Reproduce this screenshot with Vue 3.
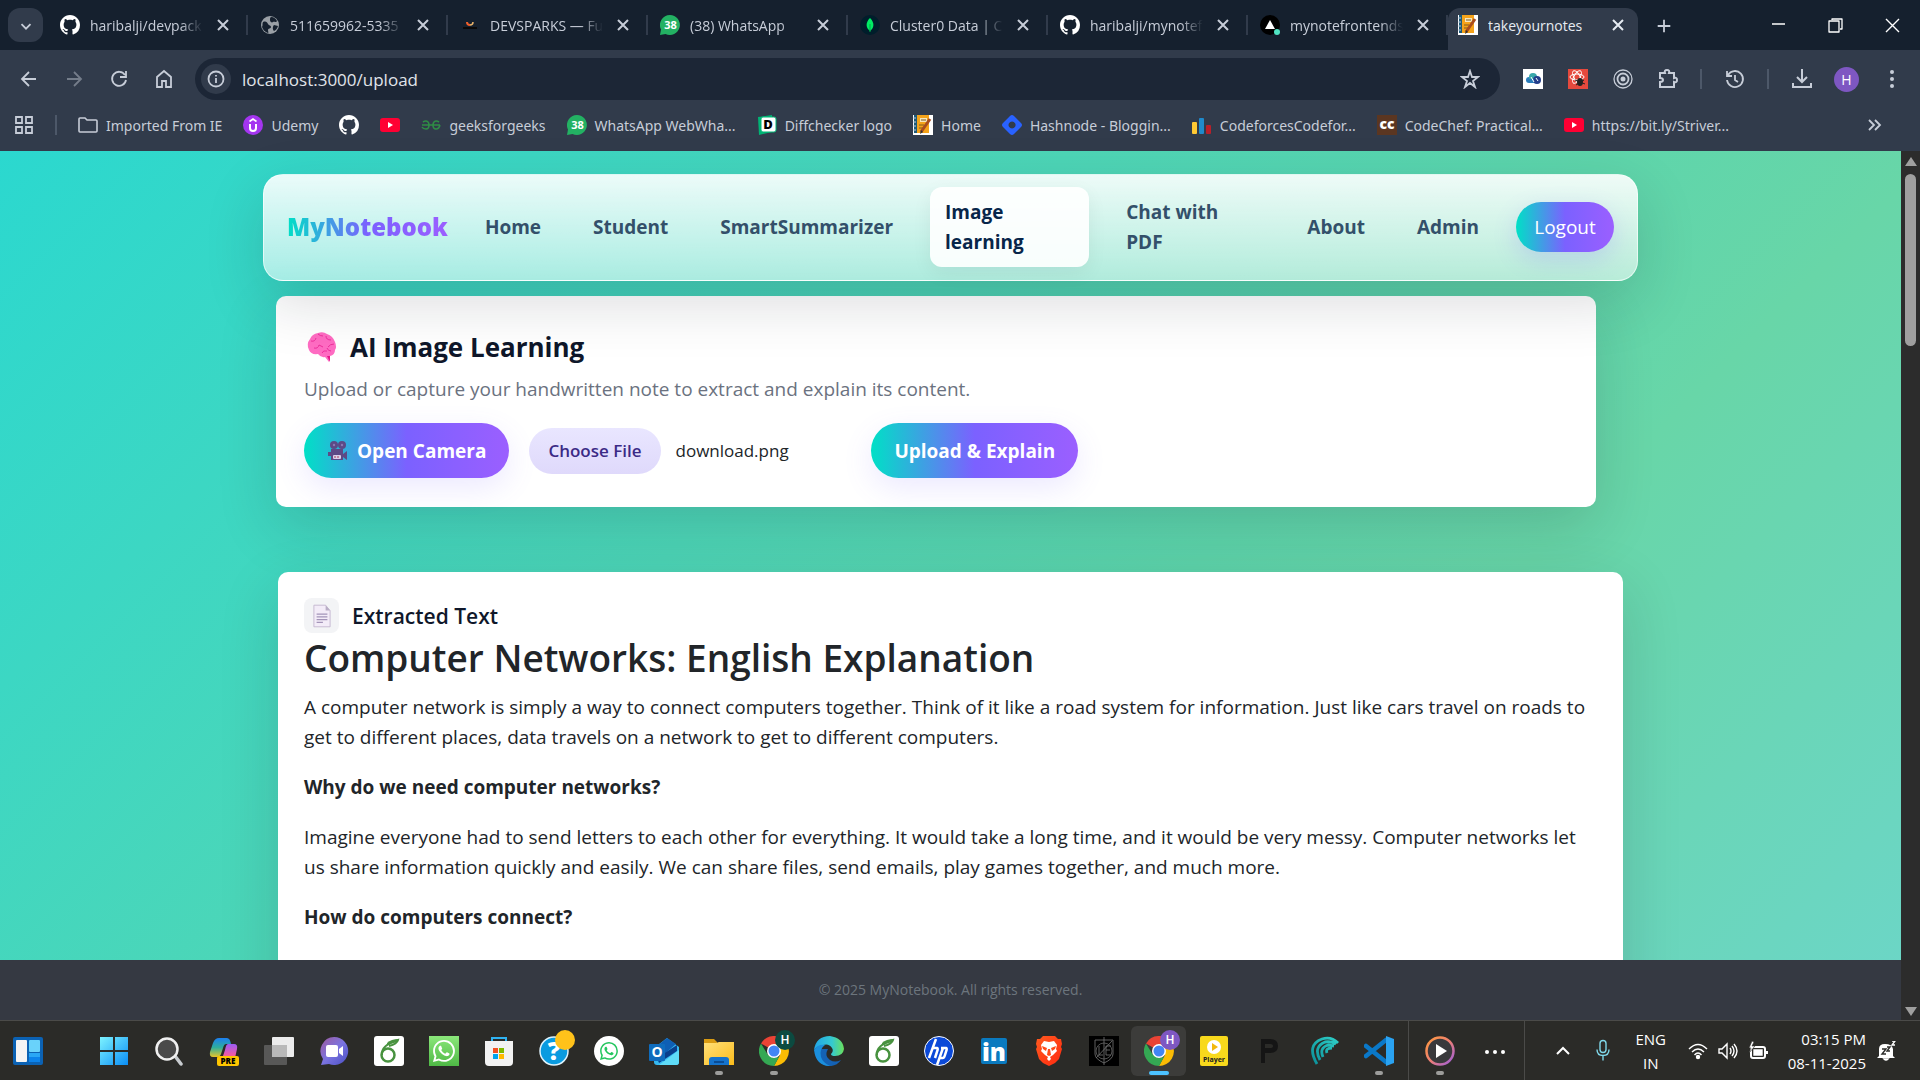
<script setup>

  import { ref } from 'vue';

  const address = ref('localhost:3000/upload');
  const fileName = ref('download.png');

  const tabs = [
    { icon: 'github', title: 'haribalji/devpack' },
    { icon: 'globe', title: '511659962-5335' },
    { icon: 'sparks', title: 'DEVSPARKS — Fu' },
    { icon: 'wa38', title: '(38) WhatsApp' },
    { icon: 'mongo', title: 'Cluster0 Data | Cl' },
    { icon: 'github', title: 'haribalji/mynotef' },
    { icon: 'vercel', title: 'mynotefrontends' },
    { icon: 'notebook', title: 'takeyournotes', active: true }
  ];

  const bookmarks = [
    { icon: 'folder', title: 'Imported From IE' },
    { icon: 'udemy', title: 'Udemy' },
    { icon: 'github', title: '' },
    { icon: 'youtube', title: '' },
    { icon: 'gfg', title: 'geeksforgeeks' },
    { icon: 'wa38', title: 'WhatsApp WebWha...' },
    { icon: 'diff', title: 'Diffchecker logo' },
    { icon: 'notebook', title: 'Home' },
    { icon: 'hashnode', title: 'Hashnode - Bloggin...' },
    { icon: 'codeforces', title: 'CodeforcesCodefor...' },
    { icon: 'codechef', title: 'CodeChef: Practical...' },
    { icon: 'youtube', title: 'https://bit.ly/Striver...' }
  ];

  const apps = [
    { icon: 'windows', name: 'Start' },
    { icon: 'search', name: 'Search' },
    { icon: 'copilot', name: 'Copilot' },
    { icon: 'taskview', name: 'Task view' },
    { icon: 'chat', name: 'Chat' },
    { icon: 'overleaf', name: 'Overleaf' },
    { icon: 'whatsapp', name: 'WhatsApp' },
    { icon: 'store', name: 'Store' },
    { icon: 'help', name: 'Help' },
    { icon: 'waround', name: 'WhatsApp Web' },
    { icon: 'outlook', name: 'Outlook' },
    { icon: 'explorer', name: 'File Explorer', open: true },
    { icon: 'chrome-green', name: 'Chrome', open: true },
    { icon: 'edge', name: 'Edge' },
    { icon: 'overleaf', name: 'Overleaf' },
    { icon: 'hp', name: 'HP' },
    { icon: 'linkedin', name: 'LinkedIn' },
    { icon: 'brave', name: 'Brave' },
    { icon: 'crest', name: 'Crest' },
    { icon: 'chrome-purple', name: 'Chrome', active: true },
    { icon: 'player', name: 'Player' },
    { icon: 'letterp', name: 'P' },
    { icon: 'swirl', name: 'Swirl' },
    { icon: 'vscode', name: 'VS Code', open: true }
  ];

  const links = [
    { title: 'Home' },
    { title: 'Student' },
    { title: 'SmartSummarizer' },
    { title: 'Image learning', wrap: true, active: true },
    { title: 'Chat with PDF', wrap: true },
    { title: 'About' },
    { title: 'Admin' }
  ];

  const chooseFile = e => {

    if(e.target.files.length > 0) {
      fileName.value = e.target.files[0].name
    }

  };

</script>



<template>

  <svg class="gradients" aria-hidden="true">
    <defs>
      <linearGradient id="g-win" x1="0" y1="0" x2="1" y2="1"><stop offset="0" stop-color="#7df3ff" /><stop offset="1" stop-color="#0a8df5" /></linearGradient>
      <linearGradient id="g-cop1" x1="0" y1="0" x2="0" y2="1"><stop offset="0" stop-color="#1c7ff0" /><stop offset=".5" stop-color="#2fae9c" /><stop offset="1" stop-color="#e6c52a" /></linearGradient>
      <linearGradient id="g-cop2" x1="0" y1="0" x2="0" y2="1"><stop offset="0" stop-color="#9a5cf5" /><stop offset=".6" stop-color="#ee5aa8" /><stop offset="1" stop-color="#fb8a4c" /></linearGradient>
      <linearGradient id="g-chat" x1="0" y1="0" x2="1" y2="1"><stop offset="0" stop-color="#a05a9c" /><stop offset=".5" stop-color="#7b74e0" /><stop offset="1" stop-color="#4a4fc4" /></linearGradient>
      <linearGradient id="g-wa" x1="0" y1="0" x2="0" y2="1"><stop offset="0" stop-color="#8be77a" /><stop offset="1" stop-color="#4fb946" /></linearGradient>
      <linearGradient id="g-edge" x1="0" y1="0" x2="1" y2="0"><stop offset="0" stop-color="#21a5e8" /><stop offset=".6" stop-color="#35c9d0" /><stop offset="1" stop-color="#6be05a" /></linearGradient>
      <linearGradient id="g-folder" x1="0" y1="0" x2="1" y2="1"><stop offset="0" stop-color="#ffe07a" /><stop offset="1" stop-color="#fbbc1b" /></linearGradient>
      <linearGradient id="g-brave" x1="0" y1="0" x2="1" y2="1"><stop offset="0" stop-color="#ff5a1f" /><stop offset="1" stop-color="#ff2a10" /></linearGradient>
      <linearGradient id="g-swirl" x1="0" y1="1" x2="1" y2="0"><stop offset="0" stop-color="#0b8f99" /><stop offset="1" stop-color="#2fd0c8" /></linearGradient>
      <linearGradient id="g-ring" x1="0" y1="0" x2="1" y2="1"><stop offset="0" stop-color="#ff9a3c" /><stop offset=".5" stop-color="#ee7f74" /><stop offset="1" stop-color="#9a5ce0" /></linearGradient>
    </defs>
  </svg>

  <svg class="sprite" aria-hidden="true">
    <!-- browser -->
    <symbol id="github" viewBox="0 0 16 16"><path fill="#fff" d="M8 0C3.58 0 0 3.58 0 8c0 3.54 2.29 6.53 5.47 7.59.4.07.55-.17.55-.38 0-.19-.01-.82-.01-1.49-2.01.37-2.53-.49-2.69-.94-.09-.23-.48-.94-.82-1.13-.28-.15-.68-.52-.01-.53.63-.01 1.08.58 1.23.82.72 1.21 1.87.87 2.33.66.07-.52.28-.87.51-1.07-1.78-.2-3.64-.89-3.64-3.95 0-.87.31-1.59.82-2.15-.08-.2-.36-1.02.08-2.12 0 0 .67-.21 2.2.82.64-.18 1.32-.27 2-.27s1.36.09 2 .27c1.53-1.04 2.2-.82 2.2-.82.44 1.1.16 1.92.08 2.12.51.56.82 1.27.82 2.15 0 3.07-1.87 3.75-3.65 3.95.29.25.54.73.54 1.48 0 1.07-.01 1.93-.01 2.2 0 .21.15.46.55.38A8.01 8.01 0 0 0 16 8c0-4.42-3.58-8-8-8z" /></symbol>
    <symbol id="globe" viewBox="0 0 20 20"><circle cx="10" cy="10" r="9" fill="#9aa0a6" /><path fill="#15202e" d="M3 7c3-1 4 0 5 2s3 1 3 3-3 1-3 3 1 2 0 3c-3-1-5-3-6-6 1-2 0-3 1-5zM11 2c3 0 5 2 6 4-1 2-3 0-4 1s-3 0-3-2 0-2 1-3zM14 10l4 1c-1 3-2 4-4 5-2-2-1-5 0-6z" /></symbol>
    <symbol id="sparks" viewBox="0 0 20 20"><path d="M3 13h14" stroke="#0a0a0a" stroke-width="2" /><path d="M7 7q0 3 3 3" stroke="#f0602c" stroke-width="2" fill="none" /><path d="M13 7q0 3-3 3" stroke="#e8b26a" stroke-width="1.500" fill="none" /></symbol>
    <symbol id="wa38" viewBox="0 0 20 20"><path fill="#23b163" d="M10 0a10 10 0 1 1-4.500 19L0 20l1-5.500A10 10 0 0 1 10 0z" /><text x="10.500" y="14" font-family="Open Sans, sans-serif" font-size="11" font-weight="700" fill="#fff" text-anchor="middle">38</text></symbol>
    <symbol id="mongo" viewBox="0 0 20 20"><circle cx="10" cy="10" r="10" fill="#001e2b" /><path fill="#00ed64" d="M10 3c5 5 4 10 0 13-4-3-5-8 0-13z" /><path d="M10 9v8" stroke="#00a84a" /></symbol>
    <symbol id="vercel" viewBox="0 0 20 20"><circle cx="10" cy="10" r="10" fill="#000" /><path fill="#fff" d="M10 5l5 9H5z" /><circle cx="17" cy="17" r="3" fill="#50e3c2" /></symbol>
    <symbol id="notebook" viewBox="0 0 20 20"><path fill="#fff" d="M0 0h20v20H0z" /><path fill="#f5a31a" d="M3 0h13v18H3z" /><path fill="#1e5a78" d="M1 0h3v18H1z" /><path fill="#f6e6bd" d="M7 3h7v4H7z" /><path d="M8 5h5M6 10h5M6 13h4" stroke="#7c5a20" /><path d="M8 17L17 4" stroke="#a94d1e" stroke-width="3" /><path d="M7 19l1-4 2 2z" fill="#333" /><path d="M0 3h3M0 7h3M0 11h3M0 15h3" stroke="#bcd" /></symbol>
    <symbol id="folder" viewBox="0 0 20 20"><path d="M1 4q0-1 1-1h5l2 2h9q1 0 1 1v10q0 1-1 1H2q-1 0-1-1z" fill="none" stroke="#c7cdd8" stroke-width="1.600" /></symbol>
    <symbol id="udemy" viewBox="0 0 20 20"><circle cx="10" cy="10" r="10" fill="#a435f0" /><path d="M7 9v4q0 3 3 3t3-3V9" fill="none" stroke="#fff" stroke-width="2" /><path d="M6.500 6.500L10 4l3.500 2.500" fill="none" stroke="#fff" stroke-width="1.600" /></symbol>
    <symbol id="youtube" viewBox="0 0 20 20"><rect y="3" width="20" height="14" rx="3" fill="#f03" /><path fill="#fff" d="M8 7l5 3-5 3z" /></symbol>
    <symbol id="gfg" viewBox="0 0 20 20"><path d="M1 10h18M8 10q0 4-3 4t-4-2M12 10q0 4 3 4t4-4M2 7q3-2 5 0 1 1 1 3M18 7q-3-2-5 0-1 1-1 3" fill="none" stroke="#2f8d46" stroke-width="1.600" /></symbol>
    <symbol id="diff" viewBox="0 0 20 20"><path fill="#00b475" d="M1 2l14-2v17L2 20z" /><rect x="4" y="2" width="15" height="15" rx="2" fill="#fff" stroke="#00b475" /><text x="11" y="14" font-family="Open Sans, sans-serif" font-size="13" font-weight="800" text-anchor="middle">D</text></symbol>
    <symbol id="hashnode" viewBox="0 0 20 20"><path fill="#2962ff" fill-rule="evenodd" d="M8 1q2-2 4 0l7 7q2 2 0 4l-7 7q-2 2-4 0l-7-7q-2-2 0-4zM10 6.500a3.500 3.500 0 1 0 .1 0z" /></symbol>
    <symbol id="codeforces" viewBox="0 0 20 20"><rect y="7" width="5" height="12" rx="1" fill="#ffc933" /><rect x="7" y="3" width="5" height="16" rx="1" fill="#1f8acb" /><rect x="14" y="10" width="5" height="9" rx="1" fill="#b8202a" /></symbol>
    <symbol id="codechef" viewBox="0 0 20 20"><path fill="#5b3621" d="M0 0h20v20H0z" /><text x="10" y="14" font-family="Open Sans, sans-serif" font-size="14" font-weight="800" fill="#fff" text-anchor="middle">cc</text></symbol>
    <symbol id="close" viewBox="0 0 20 20"><path d="M5 5l10 10M15 5L5 15" stroke="currentColor" stroke-width="2" /></symbol>

    <!-- taskbar -->
    <symbol id="widgets" viewBox="0 0 30 30"><rect y="1" width="30" height="28" rx="2" fill="#0b62b4" /><rect x="3" y="4" width="11" height="22" rx="1" fill="#f4f4f4" /><rect x="16" y="4" width="11" height="12" rx="1" fill="#69d2fb" /><rect x="16" y="17" width="11" height="4" fill="#2aa7f5" /><rect x="16" y="21" width="11" height="5" fill="#0c83ea" /></symbol>
    <symbol id="windows" viewBox="0 0 30 30"><path fill="url(#g-win)" d="M1 1h13v13H1zM16 1h13v13H16zM1 16h13v13H1zM16 16h13v13H16z" /></symbol>
    <symbol id="search" viewBox="0 0 30 30"><path d="M21 20l6 8" stroke="#c8ccd0" stroke-width="3.500" stroke-linecap="round" /><circle cx="13" cy="13" r="10.500" fill="#4a4a4a" stroke="#f0f0f0" stroke-width="2.500" /></symbol>
    <symbol id="copilot" viewBox="0 0 30 30"><path fill="url(#g-cop1)" d="M10 2h8q3 0 4 6h-5q-2 0-3 4l-2 6q-1 3-4 3H4q-4 0-3-5l3-9q2-5 6-5z" /><path fill="url(#g-cop2)" d="M19 8h6q4 0 3 5l-2 9q-1 4-5 4h-9l4-12q1-6 3-6z" /><rect x="8" y="20" width="22" height="10" rx="2" fill="#ffc600" /><text x="19" y="28" font-family="Open Sans, sans-serif" font-size="8" font-weight="800" text-anchor="middle">PRE</text></symbol>
    <symbol id="taskview" viewBox="0 0 30 30"><rect x="8" y="1" width="22" height="20" rx="1" fill="#ececec" /><rect x="0" y="9" width="23" height="20" rx="1" fill="#777" opacity=".6" /><rect x="8" y="9" width="15" height="12" fill="#b9b9b9" /></symbol>
    <symbol id="chat" viewBox="0 0 30 30"><path fill="url(#g-chat)" d="M15 1a14 14 0 1 1-5 27l-8 1 2-6A14 14 0 0 1 15 1z" /><rect x="7" y="9" width="12" height="12" rx="2" fill="#fff" /><path fill="#fff" d="M20 13l4-3v10l-4-3z" /></symbol>
    <symbol id="overleaf" viewBox="0 0 30 30"><rect width="30" height="30" rx="3" fill="#fff" /><circle cx="14" cy="19" r="6.500" fill="none" stroke="#48923f" stroke-width="2.500" /><path d="M8 19Q7 9 24 4q-1 4-9 6" fill="none" stroke="#48923f" stroke-width="2" /><path fill="#48923f" d="M13 7q4-4 12-4-3 5-12 5z" /></symbol>
    <symbol id="waglyph" viewBox="0 0 16 16"><path d="M13.601 2.326A7.850 7.850 0 0 0 7.994 0C3.627 0 .068 3.558.064 7.926c0 1.399.366 2.760 1.057 3.965L0 16l4.204-1.102a7.900 7.900 0 0 0 3.790.965h.004c4.368 0 7.926-3.558 7.930-7.930A7.900 7.900 0 0 0 13.600 2.326zM7.994 14.521a6.600 6.600 0 0 1-3.356-.920l-.240-.144-2.494.654.666-2.433-.156-.251a6.560 6.560 0 0 1-1.007-3.505c0-3.626 2.957-6.584 6.591-6.584a6.560 6.560 0 0 1 4.660 1.931 6.560 6.560 0 0 1 1.928 4.660c-.004 3.639-2.961 6.592-6.592 6.592m3.615-4.934c-.197-.099-1.170-.578-1.353-.646-.182-.065-.315-.099-.445.099-.133.197-.513.646-.627.775-.114.133-.232.148-.430.050-.197-.100-.836-.308-1.592-.985-.590-.525-.985-1.175-1.103-1.372-.114-.198-.011-.304.088-.403.087-.088.197-.232.296-.346.100-.114.133-.198.198-.330.065-.134.034-.248-.015-.347-.050-.099-.445-1.076-.612-1.470-.160-.389-.323-.335-.445-.340-.114-.007-.247-.007-.380-.007a.730.730 0 0 0-.529.247c-.182.198-.691.677-.691 1.654s.710 1.916.810 2.049c.098.133 1.394 2.132 3.383 2.992.470.205.840.326 1.129.418.475.152.904.129 1.246.080.380-.058 1.171-.480 1.338-.943.164-.464.164-.860.114-.943-.049-.084-.182-.133-.380-.232" fill="currentColor" /></symbol>
    <symbol id="whatsapp" viewBox="0 0 30 30"><path fill="url(#g-wa)" d="M0 0h30v30H0z" /><use href="#waglyph" x="4" y="4" width="22" height="22" color="#fff" /></symbol>
    <symbol id="waround" viewBox="0 0 30 30"><circle cx="15" cy="15" r="15" fill="#fff" /><use href="#waglyph" x="6" y="6" width="18" height="18" color="#25c65f" /></symbol>
    <symbol id="store" viewBox="0 0 30 30"><path d="M8 6V2h14v4" fill="none" stroke="#2fb3f2" stroke-width="2" /><path fill="#f2f2f2" d="M1 5h28v21q0 4-4 4H5q-4 0-4-4z" /><path fill="#f25022" d="M9 12h5v5H9z" /><path fill="#7fba00" d="M15 12h5v5h-5z" /><path fill="#00a4ef" d="M9 18h5v5H9z" /><path fill="#ffb900" d="M15 18h5v5h-5z" /></symbol>
    <symbol id="help" viewBox="0 0 36 36"><circle cx="15" cy="21" r="14" fill="#0a9be0" stroke="#dff3fc" stroke-width="1.500" /><text x="15" y="30" font-family="Open Sans, sans-serif" font-size="25" font-weight="800" fill="#fff" text-anchor="middle">?</text><circle cx="26" cy="10" r="10" fill="#ffc21a" /></symbol>
    <symbol id="outlook" viewBox="0 0 30 30"><path fill="#35b8f1" d="M5 12L18 2l12 9v15q0 3-3 3H8q-3 0-3-3z" /><path fill="#0f5fb5" d="M8 10L18 2l9 6-14 12z" /><path fill="#0a3f8c" d="M28 9v6L10 27l-2-5z" /><path fill="#5fdcf8" d="M30 14v12q0 3-3 3H10z" /><rect y="8" width="16" height="17" rx="1" fill="#0f6cbd" /><text x="8" y="21" font-family="Open Sans, sans-serif" font-size="14" font-weight="700" fill="#fff" text-anchor="middle">O</text></symbol>
    <symbol id="explorer" viewBox="0 0 30 30"><path fill="#d99b12" d="M0 3h10l3 3v5H0z" /><path fill="url(#g-folder)" d="M0 7h12l3-1h15v23H0z" /><path fill="#1573cc" d="M5 24q0-3 3-3h14q3 0 3 3v5H5z" /><path d="M10 26h10" stroke="#0a4c94" stroke-width="2" /></symbol>
    <symbol id="chrome" viewBox="0 0 30 30"><path fill="#ea4335" d="M15 15L2 7.500a15 15 0 0 1 26 0z" /><path fill="#fbbc04" d="M15 8h13.200a15 15 0 0 1-13.200 22l6-11z" /><path fill="#34a853" d="M2 7.500L9 19l6 3 5-1-5 9A15 15 0 0 1 2 7.500z" /><circle cx="15" cy="15" r="7" fill="#fff" /><circle cx="15" cy="15" r="5.500" fill="#4285f4" /></symbol>
    <symbol id="chrome-green" viewBox="0 0 36 36"><use href="#chrome" x="0" y="6" width="30" height="30" /><circle cx="26" cy="10" r="10" fill="#0c4a40" /><text x="26" y="14" font-family="Roboto, sans-serif" font-size="12" font-weight="500" fill="#fff" text-anchor="middle">H</text></symbol>
    <symbol id="chrome-purple" viewBox="0 0 36 36"><use href="#chrome" x="0" y="6" width="30" height="30" /><circle cx="26" cy="10" r="10" fill="#7e57c2" /><text x="26" y="14" font-family="Roboto, sans-serif" font-size="12" font-weight="500" fill="#fff" text-anchor="middle">H</text></symbol>
    <symbol id="edge" viewBox="0 0 30 30"><path fill="#1462b5" d="M1 13Q0 26 13 30q9 1 14-6-6 3-11 0-6-4-2-11z" /><path fill="url(#g-edge)" d="M0 14Q2 0 16 0q13 2 14 13-1 7-9 7-4 0-4-2 3-3 1-6-3-5-9-3-6 1-9 5z" /><path fill="#1b8fdd" d="M0 14q4-6 11-5-6 4-4 12 2 6 9 9Q2 30 0 14z" /></symbol>
    <symbol id="hp" viewBox="0 0 30 30"><circle cx="15" cy="15" r="14.500" fill="#0b49d8" stroke="#fff" /><path d="M12 3L5 22M9 12h4q1 0 .6 2L11 22M19 12l-6 17M17 12h5q1 0 .6 2l-2 6q-.5 2-2 2h-3" fill="none" stroke="#fff" stroke-width="2.500" /></symbol>
    <symbol id="linkedin" viewBox="0 0 30 30"><rect x="2" y="2" width="26" height="26" rx="2" fill="#0a7abf" /><text x="15" y="25" font-family="Open Sans, sans-serif" font-size="24" font-weight="800" fill="#fff" text-anchor="middle">in</text></symbol>
    <symbol id="brave" viewBox="0 0 30 30"><path fill="url(#g-brave)" d="M9 0h12l3 3h3l1 5-1 3 1 2-3 10-4 4-6 3-6-3-4-4L2 13l1-2-1-3 1-5h3z" /><path fill="#fff" d="M10 5l5 1 5-1 3 4-1 4 1 2-4 4-3 2 1 2-2 2-2-2 1-2-3-2-4-4 1-2-1-4z" /><path fill="#ff4a1a" d="M8 10l5 2-1 3-3-2zM22 10l-5 2 1 3 3-2zM14 13h2l1 6-2 1-2-1z" /></symbol>
    <symbol id="crest" viewBox="0 0 30 30"><path d="M0 0h30v30H0z" /><path d="M6 4h18v14q0 5-9 9-9-4-9-9zM15 1v28M10 10v9h4M17 10h5M17 14h4M17 19h5M17 10v9M23 5L7 22" fill="none" stroke="#777" stroke-width=".8" /><circle cx="15" cy="15" r="8" fill="none" stroke="#666" stroke-width=".8" /></symbol>
    <symbol id="player" viewBox="0 0 30 30"><rect x="1" y="0" width="28" height="30" rx="2" fill="#f8d91c" /><circle cx="15" cy="11" r="7" fill="#fff" /><path fill="#f2b90c" d="M13 7l6 4-6 4z" /><text x="15" y="26" font-family="Open Sans, sans-serif" font-size="7" font-weight="700" fill="#222" text-anchor="middle">Player</text></symbol>
    <symbol id="letterp" viewBox="0 0 30 30"><path fill="#151515" fill-rule="evenodd" d="M7 3h9q8 0 8 7t-8 7h-5v10H7zM11 8v4h5q3 0 3-2t-3-2z" /></symbol>
    <symbol id="swirl" viewBox="0 0 30 30"><path d="M8 28Q-3 9 13 3q9-3 16 4M11 24Q4 11 16 6q6-1 11 2M14 21Q10 12 19 9l6 1M18 17q-2-5 5-5" fill="none" stroke="url(#g-swirl)" stroke-width="2.800" /></symbol>
    <symbol id="vscode" viewBox="0 0 30 30"><path d="M2 10l20 16M2 20L22 4" stroke="#0a78c8" stroke-width="4.500" stroke-linecap="round" /><path fill="#2aa3f2" d="M22 0l8 3v24l-8 3z" /></symbol>
    <symbol id="media" viewBox="0 0 30 30"><circle cx="15" cy="15" r="13.500" fill="#39393c" stroke="url(#g-ring)" stroke-width="2.500" /><path fill="#fff" d="M11 8l11 7-11 7z" /></symbol>
  </svg>

  <div class="screen">

    <header class="browser">
      <div class="tabs">
        <button class="tabs__search" aria-label="Search tabs">
          <svg viewBox="0 0 20 20"><path d="M5 8l5 5 5-5" fill="none" stroke="currentColor" stroke-width="2" /></svg>
        </button>
        <div v-for="(tab, index) in tabs" :key="index" class="tab" :class="{ 'tab--active': tab.active }">
          <svg class="icon"><use :href="'#' + tab.icon" /></svg>
          <span class="tab__title">{{ tab.title }}</span>
          <button class="tab__close" aria-label="Close tab"><svg><use href="#close" /></svg></button>
        </div>
        <button class="tabs__new" aria-label="New tab">
          <svg viewBox="0 0 20 20"><path d="M10 3v14M3 10h14" stroke="currentColor" stroke-width="2" /></svg>
        </button>
        <div class="window-buttons">
          <button aria-label="Minimize"><svg viewBox="0 0 20 20"><path d="M4 9h13" stroke="#fff" stroke-width="1.500" /></svg></button>
          <button aria-label="Restore"><svg viewBox="0 0 20 20"><path d="M4 6h10v11H4zM7 5V4h10v10h-2" fill="none" stroke="#fff" stroke-width="1.300" stroke-linejoin="round" /></svg></button>
          <button aria-label="Close"><svg viewBox="0 0 20 20"><path d="M4 4l13 13M17 4L4 17" stroke="#fff" stroke-width="1.400" /></svg></button>
        </div>
      </div>

      <div class="toolbar">
        <div class="toolbar__nav">
          <button aria-label="Back"><svg viewBox="0 0 20 20"><path d="M17 10H4M10 3l-7 7 7 7" /></svg></button>
          <button aria-label="Forward" class="dim"><svg viewBox="0 0 20 20"><path d="M3 10h13M10 3l7 7-7 7" /></svg></button>
          <button aria-label="Reload"><svg viewBox="0 0 20 20"><path d="M16 6a7 7 0 1 0 1 5M17 2v6h-6" /></svg></button>
          <button aria-label="Home page"><svg viewBox="0 0 20 20"><path d="M3 18V8l7-6 7 6v10h-5v-6H8v6z" /></svg></button>
        </div>
        <div class="omnibox">
          <span class="omnibox__info"><svg viewBox="0 0 20 20"><circle cx="10" cy="10" r="7.500" /><path d="M10 9v5M10 6v1.500" /></svg></span>
          <input type="text" v-model="address" aria-label="Address">
          <button aria-label="Bookmark this page"><svg viewBox="0 0 20 20"><path d="M10 2l2 6h6l-5 4 2 6-5-4-5 4 2-6-5-4h6z" /></svg></button>
        </div>
        <div class="toolbar__ext">
          <button aria-label="Cloud"><svg viewBox="0 0 20 20"><path fill="#fff" stroke="none" d="M0 0h20v20H0z" /><g stroke="none"><circle cx="6" cy="11" r="3" fill="#2a7dbb" /><circle cx="10" cy="8" r="4" fill="#39a8ab" /><circle cx="14" cy="11" r="4" fill="#233e8b" /><path fill="#2a7dbb" d="M6 10h5v4H6z" /></g><path d="M8 8l3 5M13 9l2 3" stroke="#fff" stroke-width="1" /></svg></button>
          <button aria-label="React tools"><svg viewBox="0 0 20 20"><path fill="#e5493d" stroke="none" d="M0 0h20v20H0z" /><g stroke="#fff" stroke-width="1"><ellipse cx="9" cy="8" rx="7" ry="3" /><ellipse cx="9" cy="8" rx="7" ry="3" transform="rotate(60 9 8)" /><ellipse cx="9" cy="8" rx="7" ry="3" transform="rotate(120 9 8)" /></g><ellipse cx="12" cy="13" rx="3" ry="4" fill="#222" stroke="none" /><path d="M7 11l10 4M8 16l8-5" stroke="#222" stroke-width="1" /></svg></button>
          <button aria-label="Focus"><svg viewBox="0 0 20 20"><circle cx="10" cy="10" r="9" stroke-width="1.300" /><circle cx="10" cy="10" r="5.500" /><circle cx="10" cy="10" r="2.500" fill="#c7cdd8" stroke="none" /></svg></button>
          <button aria-label="Extensions"><svg viewBox="0 0 20 20"><path d="M2 4h5q-1-3 2-3t2 3h5v5q3-1 3 2t-3 2v5H2v-5q3 0 3-2t-3-2z" stroke-width="2" /></svg></button>
          <i></i>
          <button aria-label="History"><svg viewBox="0 0 20 20"><path d="M3 6a8 8 0 1 1-1 5M2 2v5h5M10 6v5l3 2" /></svg></button>
          <i></i>
          <button aria-label="Downloads"><svg viewBox="0 0 20 20"><path d="M10 0v12M5 8l5 5 5-5M1 14v4h18v-4" stroke-width="2" /></svg></button>
          <button class="avatar" aria-label="Profile">H</button>
          <button aria-label="Menu"><svg viewBox="0 0 20 20"><g fill="#c7cdd8" stroke="none"><circle cx="10" cy="3" r="2" /><circle cx="10" cy="10" r="2" /><circle cx="10" cy="17" r="2" /></g></svg></button>
        </div>
      </div>

      <nav class="bookmarks">
        <button aria-label="All apps"><svg class="icon" viewBox="0 0 20 20"><path d="M2 2h6v6H2zM12 2h6v6h-6zM2 12h6v6H2zM12 12h6v6h-6z" fill="none" stroke="#c7cdd8" stroke-width="1.800" /></svg></button>
        <i></i>
        <a v-for="(item, index) in bookmarks" :key="index" href="#" :aria-label="item.title || item.icon">
          <svg class="icon"><use :href="'#' + item.icon" /></svg>
          <span v-if="item.title">{{ item.title }}</span>
        </a>
        <button class="bookmarks__more" aria-label="More bookmarks"><svg class="icon" viewBox="0 0 20 20"><path d="M5 5l5 5-5 5M11 5l5 5-5 5" fill="none" stroke="#c7cdd8" stroke-width="1.800" /></svg></button>
      </nav>
    </header>

    <div class="viewport">
      <div class="page">
        <div class="page__body">

          <nav class="navbar">
            <a href="#" class="brand">MyNotebook</a>
            <a v-for="(link, index) in links" :key="index" href="#" class="nav-link" :class="{ 'nav-link--active': link.active, 'nav-link--wrap': link.wrap }">{{ link.title }}</a>
            <button class="logout">Logout</button>
          </nav>

          <section class="card upload">
            <h2>
              <svg viewBox="0 0 32 32"><path fill="#ff6cc3" d="M12 2q5-2 9 1 6 2 8 8 2 5 0 8 0 5-5 6l-1 6-4-5q-4 1-7-3-7 1-9-4-3-6 1-11 2-5 8-6z" /><path fill="#e8178a" d="M21 25l3 6v-6z" /><path d="M12 3q2 2 5 2M5 10q4 1 5-3M20 5q0 4 5 4M28 13q-4 0-6 3M8 17q4 1 5-3M13 14l4 2M16 22q1-3 5-2M25 20q-3 0-4-3" fill="none" stroke="#ee2f9d" /></svg>
              AI Image Learning
            </h2>
            <p>Upload or capture your handwritten note to extract and explain its content.</p>
            <div class="upload__actions">
              <button class="btn">
                <svg viewBox="0 0 20 20"><g fill="#5d4a86"><circle cx="6" cy="4" r="4" /><circle cx="14" cy="4" r="4" /><path d="M3 8h12v11H3zM15 13l4-3v9l-4-3zM0 11h3v4H0z" /></g><circle cx="6" cy="4" r="1.200" fill="#8a79b3" /><circle cx="14" cy="4" r="1.200" fill="#8a79b3" /><rect x="5" y="14" width="8" height="4" rx="1" fill="#d9cfea" /><path d="M7 15v2M10 15v2" stroke="#b0405c" /></svg>
                Open Camera
              </button>
              <div class="file">
                <label for="note-file">Choose File</label>
                <input id="note-file" type="file" @change="chooseFile">
                <span>{{ fileName }}</span>
              </div>
              <button class="btn">Upload &amp; Explain</button>
            </div>
          </section>

          <section class="card result">
            <div class="result__head">
              <span class="result__icon"><svg viewBox="0 0 20 26"><path fill="#f3ecf8" stroke="#c3b5cf" d="M1 1h13l5 6v18H1z" /><path fill="#b9aec6" d="M14 1l5 6h-5z" /><path d="M4 11h12M4 14h12M4 17h12M4 20h7" stroke="#a394b8" stroke-width="1.300" /></svg></span>
              Extracted Text
            </div>
            <h1>Computer Networks: English Explanation</h1>
            <p>A computer network is simply a way to connect computers together. Think of it like a road system for information. Just like cars travel on roads to get to different places, data travels on a network to get to different computers.</p>
            <p><strong>Why do we need computer networks?</strong></p>
            <p>Imagine everyone had to send letters to each other for everything. It would take a long time, and it would be very messy. Computer networks let us share information quickly and easily. We can share files, send emails, play games together, and much more.</p>
            <p><strong>How do computers connect?</strong></p>
            <p>There are different ways to connect computers. Sometimes, they use wire cables like roads. Sometimes they use air, which is called</p>
          </section>

        </div>
        <footer>© 2025 MyNotebook. All rights reserved.</footer>
      </div>

      <div class="scrollbar">
        <svg viewBox="0 0 12 10"><path fill="#9f9f9f" d="M6 0l6 9H0z" /></svg>
        <div class="scrollbar__thumb"></div>
        <svg viewBox="0 0 12 10"><path fill="#9f9f9f" d="M6 10L0 1h12z" /></svg>
      </div>
    </div>

    <div class="taskbar">
      <button class="app app--widgets" aria-label="Widgets"><svg><use href="#widgets" /></svg></button>
      <button v-for="(app, index) in apps" :key="index" class="app" :class="{ 'app--open': app.open, 'app--active': app.active, 'app--badge': app.icon === 'help' || app.icon.startsWith('chrome') }" :aria-label="app.name">
        <svg><use :href="'#' + app.icon" /></svg>
      </button>
      <i></i>
      <button class="app app--open" aria-label="Media Player"><svg><use href="#media" /></svg></button>
      <button class="app" aria-label="More"><svg viewBox="0 0 30 30"><g fill="#fff"><circle cx="7" cy="16" r="2" /><circle cx="15" cy="16" r="2" /><circle cx="23" cy="16" r="2" /></g></svg></button>
      <i></i>
      <div class="tray">
        <button class="tray__up" aria-label="Hidden icons"><svg viewBox="0 0 20 20"><path d="M4 13l6-6 6 6" stroke-width="2" /></svg></button>
        <button class="tray__mic" aria-label="Microphone"><svg viewBox="0 0 20 20"><rect x="7" y="0" width="6" height="12" rx="3" /><path d="M4 9q0 6 6 6t6-6M10 15v5" /></svg></button>
        <div class="tray__lang">ENG<br>IN</div>
        <button class="tray__status" aria-label="Network, sound and battery">
          <svg viewBox="0 0 20 20"><path d="M1 8q9-9 18 0M4 11q6-6 12 0M6.500 14q3.500-4 7 0" /><circle cx="10" cy="16" r="1.500" fill="#fff" /></svg>
          <svg viewBox="0 0 20 20"><path d="M1 8h3l5-5v14l-5-5H1zM12 7q2 3 0 6M14 5q4 5 0 10M16 3q6 7 0 14" /></svg>
          <svg viewBox="0 0 20 20"><rect x="3" y="6" width="14" height="11" rx="2" stroke-width="2" /><path d="M6 9h8v5H6z" fill="#fff" /><path d="M19 10v3" stroke-width="2" /><path d="M4 0L1 7h2l-2 5 6-7H4l2-4z" fill="#fff" stroke="#2b2b28" stroke-width=".6" /></svg>
        </button>
        <div class="tray__clock">03:15 PM<br>08-11-2025</div>
        <button class="tray__bell" aria-label="Notifications"><svg viewBox="0 0 20 20"><path d="M3 15V8q0-5 6-5 7 0 8 5v7l2 2H1z" fill="#fff" stroke="none" /><path d="M8 18q2 2 4 0z" fill="#fff" /><path d="M6 8h4l-4 5h4" stroke="#2b2b28" /><path d="M11 6h3l-3 4h3" stroke="#2b2b28" /><path d="M16 0h3l-3 4h3" /></svg></button>
      </div>
    </div>

  </div>

</template>



<style>

  /*==========Base==========*/
    body {
      margin: 0;
      background: #2b2b28;
    }

</style>



<style scoped>

  /*==========Reset==========*/
    *, *::before, *::after {
      box-sizing: border-box;
    }
    button {
      padding: 0;
      border: 0;
      background: none;
      color: inherit;
      font: inherit;
      cursor: pointer;
    }
    a {
      color: inherit;
      text-decoration: none;
    }

  /*==========Screen==========*/
    .screen {
      --purple: linear-gradient(90deg, #00e0c6 0%, #7b61ff 50%, #9b5fff 100%);
      display: flex;
      flex-direction: column;
      height: 100vh;
      overflow: hidden;
      font-family: 'Segoe UI', 'Open Sans', 'Noto Sans', sans-serif;
    }
    .gradients {
      position: absolute;
      width: 0;
      height: 0;
    }
    .sprite {
      display: none;
    }
    .icon {
      flex: none;
      width: 20px;
      height: 20px;
    }

  /*==========Browser tabs==========*/
    .browser {
      flex: none;
      background: #313b4b;
      color: #c7cdd8;
      font-size: 14px;
    }
    .tabs {
      display: flex;
      align-items: flex-end;
      height: 50px;
      padding-left: 8px;
      background: #15202e;
    }
    .tabs__search {
      flex: none;
      align-self: center;
      width: 35px;
      height: 34px;
      margin-right: 5px;
      border-radius: 12px;
      background: #313b4b;
    }
    .tabs__search svg {
      width: 18px;
      height: 18px;
      vertical-align: middle;
    }
    .tab {
      position: relative;
      display: flex;
      align-items: center;
      gap: 10px;
      flex: 0 1 200px;
      min-width: 0;
      height: 42px;
      padding: 0 15px 8px 12px;
    }
    .tab::after {
      content: '';
      position: absolute;
      right: 0;
      width: 2px;
      height: 20px;
      background: #313b4b;
    }
    .tab--active {
      flex-basis: 190px;
      padding: 0 10px 8px;
      border-radius: 12px 12px 0 0;
      background: #313b4b;
      color: #e6ebf2;
    }
    .tab--active::after {
      display: none;
    }
    .tab__title {
      flex: 1;
      overflow: hidden;
      white-space: nowrap;
      mask-image: linear-gradient(90deg, #000 80%, transparent);
    }
    .tab--active .tab__title {
      mask-image: none;
    }
    .tab__close {
      width: 20px;
      height: 20px;
    }
    .tab__close svg {
      display: block;
      width: 20px;
      height: 20px;
    }
    .tabs__new {
      width: 52px;
      height: 42px;
      padding-bottom: 8px;
    }
    .tabs__new svg {
      width: 18px;
      height: 18px;
      vertical-align: middle;
    }
    .window-buttons {
      display: flex;
      align-self: flex-start;
      margin-left: auto;
    }
    .window-buttons button {
      width: 57px;
      height: 48px;
    }
    .window-buttons svg {
      width: 20px;
      height: 20px;
      vertical-align: middle;
    }

  /*==========Toolbar==========*/
    .toolbar {
      display: flex;
      align-items: center;
      height: 58px;
      padding: 0 6px;
    }
    .toolbar svg, .tray svg {
      display: block;
      width: 20px;
      height: 20px;
      margin: auto;
      fill: none;
      stroke: #c7cdd8;
      stroke-width: 1.8;
    }
    .toolbar__nav {
      display: flex;
      margin-right: 9px;
    }
    .toolbar__nav button {
      width: 45px;
      height: 40px;
    }
    .toolbar__nav .dim {
      opacity: .45;
    }
    .omnibox {
      display: flex;
      align-items: center;
      gap: 9px;
      flex: 1;
      height: 42px;
      padding: 0 20px 0 6px;
      border-radius: 21px;
      background: #1c2636;
    }
    .omnibox__info {
      display: flex;
      width: 30px;
      height: 30px;
      border-radius: 50%;
      background: #313b4b;
    }
    .omnibox input {
      flex: 1;
      border: 0;
      outline: 0;
      background: none;
      color: #e0e4ea;
      font: inherit;
      font-size: 17px;
    }
    .toolbar__ext {
      display: flex;
      align-items: center;
      margin-left: 10px;
    }
    .toolbar__ext button {
      width: 45px;
      height: 40px;
    }
    .toolbar__ext i {
      width: 2px;
      height: 20px;
      margin: 0 10px;
      background: #4d5869;
    }
    .toolbar__ext .avatar {
      width: 25px;
      height: 25px;
      margin: 0 10px;
      border-radius: 50%;
      background: #7e57c2;
      color: #fff;
    }

  /*==========Bookmarks==========*/
    .bookmarks {
      display: flex;
      align-items: center;
      gap: 21px;
      height: 43px;
      padding: 0 36px 9px 14px;
      font-family: 'Segoe UI', 'Noto Sans', sans-serif;
    }
    .bookmarks i {
      width: 2px;
      height: 20px;
      background: #4d5869;
    }
    .bookmarks a {
      display: flex;
      align-items: center;
      gap: 8px;
      white-space: nowrap;
    }
    .bookmarks .icon {
      display: block;
    }
    .bookmarks__more {
      margin-left: auto;
    }

  /*==========Page==========*/
    .viewport {
      display: flex;
      flex: 1;
      min-height: 0;
    }
    .page {
      display: flex;
      flex-direction: column;
      flex: 1;
      background: linear-gradient(135deg, #2bd8cf 0%, #5ed5ab 58%, #68d6a8 70%, #6cd6c8 100%);
      font-size: 19px;
      line-height: 30px;
      color: #212529;
    }
    .page__body {
      flex: 1;
      min-height: 0;
      width: 100%;
      max-width: 1375px;
      margin: 0 auto;
      padding-top: 23px;
    }
    .navbar {
      position: relative;
      z-index: 1;
      display: flex;
      align-items: center;
      gap: 22px;
      padding: 12px 23px 13px;
      border: 1px solid rgba(255, 255, 255, .6);
      border-radius: 20px;
      background: linear-gradient(180deg, rgba(255, 255, 255, .9), rgba(255, 255, 255, .55));
      box-shadow: 0 20px 60px rgba(16, 24, 40, .16);
    }
    .brand {
      background: var(--purple);
      background-clip: text;
      color: transparent;
      font-size: 24px;
      font-weight: 800;
    }
    .nav-link {
      padding: 10px 15px;
      border-radius: 12px;
      color: #33506a;
      font-weight: 700;
    }
    .nav-link--wrap {
      flex: 1;
      padding-right: 36px;
    }
    .nav-link--active {
      background: rgba(255, 255, 255, .9);
      box-shadow: 0 6px 20px rgba(16, 24, 40, .06);
      color: #08264a;
    }
    .logout {
      width: 98px;
      height: 50px;
      border-radius: 25px;
      background: var(--purple);
      box-shadow: 0 8px 24px rgba(123, 97, 255, .2);
      color: #fff;
    }

  /*==========Cards==========*/
    .card {
      border-radius: 10px;
      background: #fff;
      box-shadow: 0 20px 60px rgba(16, 24, 40, .16);
    }
    .upload {
      margin: 15px 42px 0 13px;
      padding: 31px 28px 29px;
    }
    .upload h2 {
      display: flex;
      align-items: center;
      gap: 10px;
      margin: 0;
      color: #0f172a;
      font-size: 26px;
      font-weight: 700;
      line-height: 40px;
    }
    .upload h2 svg {
      width: 36px;
      height: 32px;
    }
    .upload p {
      margin: 7px 0 19px;
      color: #6b7280;
    }
    .upload__actions {
      display: flex;
      align-items: center;
      gap: 20px;
    }
    .btn {
      display: flex;
      align-items: center;
      gap: 8px;
      height: 55px;
      padding: 0 23px;
      border-radius: 28px;
      background: var(--purple);
      box-shadow: 0 10px 30px rgba(123, 97, 255, .14);
      color: #fff;
      font-weight: 700;
    }
    .btn svg {
      width: 22px;
      height: 20px;
    }
    .file {
      display: flex;
      align-items: center;
      gap: 15px;
      width: 322px;
      font-size: 17px;
    }
    .file label {
      padding: 8px 19px;
      border-radius: 23px;
      background: linear-gradient(180deg, #e9e6ff, #dfd9fb);
      color: #3b2a86;
      font-weight: 600;
      cursor: pointer;
    }
    .file input {
      position: absolute;
      width: 1px;
      height: 1px;
      opacity: 0;
    }
    .result {
      margin: 65px 15px 0;
      padding: 26px;
    }
    .result__head {
      display: flex;
      align-items: center;
      gap: 13px;
      color: #0f172a;
      font-size: 21px;
      font-weight: 600;
    }
    .result__icon {
      display: flex;
      width: 35px;
      height: 35px;
      border-radius: 8px;
      background: #f3f4f6;
    }
    .result__icon svg {
      width: 18px;
      height: 24px;
      margin: auto;
    }
    .result h1 {
      margin: 1px 0 10px;
      font-size: 37px;
      font-weight: 600;
      line-height: 48px;
    }
    .result p {
      margin: 0 0 20px;
    }
    footer {
      position: relative;
      z-index: 1;
      padding: 15px;
      background: #353942;
      color: #6c757d;
      font-size: 14px;
      text-align: center;
    }

  /*==========Scrollbar==========*/
    .scrollbar {
      display: flex;
      flex-direction: column;
      align-items: center;
      gap: 7px;
      width: 19px;
      padding: 6px 0 4px;
      background: #2c2c2c;
    }
    .scrollbar svg {
      width: 12px;
      height: 10px;
    }
    .scrollbar svg:last-child {
      margin-top: auto;
    }
    .scrollbar__thumb {
      width: 11px;
      height: 20%;
      border-radius: 6px;
      background: #9f9f9f;
    }

  /*==========Taskbar==========*/
    .taskbar {
      display: flex;
      align-items: center;
      flex: none;
      height: 60px;
      border-top: 1px solid #4b4b49;
      background: #2b2b28;
      color: #fff;
    }
    .taskbar i {
      align-self: stretch;
      width: 1px;
      margin: 0 3px 0 2px;
      background: #4b4b49;
    }
    .app {
      position: relative;
      flex: 0 1 55px;
      height: 50px;
    }
    .app svg {
      display: block;
      width: 30px;
      height: 30px;
      margin: auto;
    }
    .app--widgets {
      margin-right: 31px;
    }
    /* room for the badge that sticks out top right */
    .app--badge svg {
      width: 36px;
      height: 36px;
      margin: 4px 6px 10px 13px;
    }
    .app--active {
      border-radius: 6px;
      background: #3c3c3a;
    }
    .app--open::after, .app--active::after {
      content: '';
      position: absolute;
      bottom: 1px;
      left: 24px;
      width: 8px;
      height: 4px;
      border-radius: 2px;
      background: #9d9d9b;
    }
    .app--active::after {
      left: 18px;
      width: 20px;
      background: #4cc2ff;
    }
    .tray {
      display: flex;
      align-items: center;
      flex: 1;
      justify-content: flex-end;
      padding-right: 24px;
      font-size: 15px;
      line-height: 24px;
    }
    .tray svg {
      stroke: #fff;
      stroke-width: 1.4;
    }
    .tray__up, .tray__mic {
      width: 40px;
    }
    .tray .tray__mic svg {
      height: 25px;
      stroke: #7fd8ea;
    }
    .tray__lang {
      width: 56px;
      text-align: center;
    }
    .tray__status {
      display: flex;
      gap: 10px;
      padding: 0 20px 0 9px;
    }
    .tray__clock {
      text-align: right;
    }
    .tray__bell {
      margin-left: 10px;
    }

</style>
